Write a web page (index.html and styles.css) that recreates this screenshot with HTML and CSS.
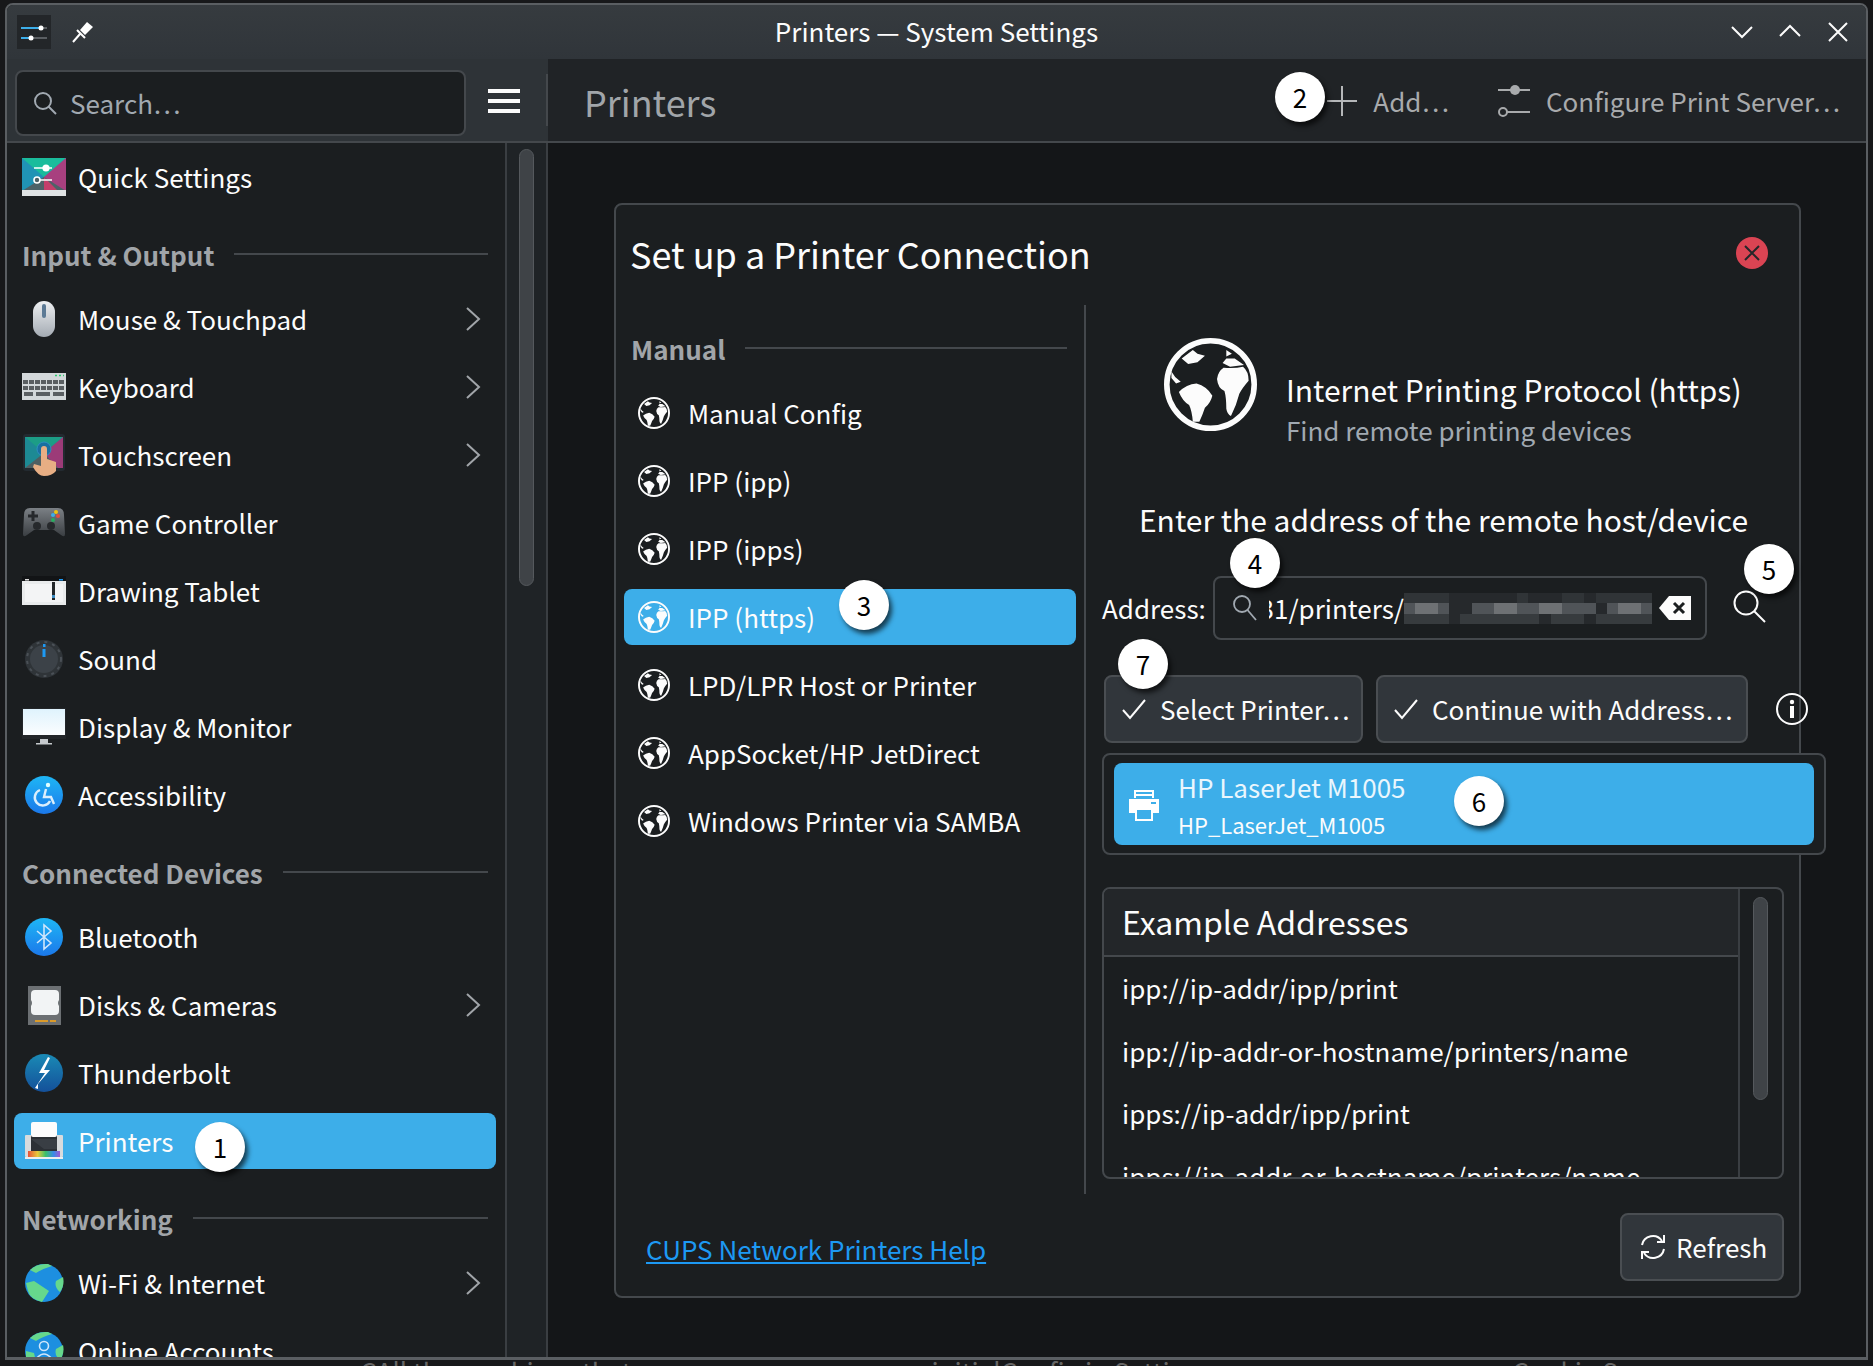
FILE: index.html
```html
<!DOCTYPE html>
<html lang="en">
<head>
    <meta charset="UTF-8">
    <title>Printers — System Settings</title>
    <link rel="stylesheet" href="styles.css">
</head>
<body>
    <svg class="defs" width="0" height="0">
        <defs>
            <linearGradient id="blueFill" x1="0" y1="0" x2="0" y2="1"><stop offset="0" stop-color="#1eb6f5"/><stop offset="1" stop-color="#1b78ea"/></linearGradient>
            <linearGradient id="boltFill" x1="0" y1="0" x2="0" y2="1"><stop offset="0" stop-color="#1a8ab5"/><stop offset="1" stop-color="#14509a"/></linearGradient>
            <linearGradient id="mouseFill" x1="0" y1="0" x2="0" y2="1"><stop offset="0" stop-color="#eef0f2"/><stop offset="1" stop-color="#a4abb3"/></linearGradient>
            <linearGradient id="padFill" x1="0" y1="0" x2="0" y2="1"><stop offset="0" stop-color="#7b8085"/><stop offset="1" stop-color="#3a3e42"/></linearGradient>
            <linearGradient id="screenFill" x1="0" y1="0" x2="0" y2="1"><stop offset="0" stop-color="#dff3fd"/><stop offset="1" stop-color="#fbfdfe"/></linearGradient>
            <linearGradient id="rainbow" x1="0" y1="0" x2="1" y2="0"><stop offset="0" stop-color="#e8503a"/><stop offset=".3" stop-color="#e8c93a"/><stop offset=".55" stop-color="#3ac06a"/><stop offset=".8" stop-color="#3a8ae8"/><stop offset="1" stop-color="#a05ad0"/></linearGradient>
            <symbol id="globe" viewBox="0 0 100 100">
                <circle cx="50" cy="50" r="47" fill="none" stroke="currentColor" stroke-width="6"/>
                <path fill="currentColor" d="M16 58Q24 50 35 49Q46 52 52 62Q50 70 44 75Q41 84 38 90L31 90Q30 78 27 72Q20 68 16 58Z M57 44Q58 36 64 32Q76 33 85 31Q91 36 91 46Q84 54 81 60Q78 72 72 84Q68 82 67 76Q67 64 65 57Q58 54 57 44Z M63 27L67 22L76 22L86 29L71 31Z M19 22L31 13L36 17L44 19L36 26L26 28Z M8 36L12 42L18 47L13 49L8 43Z M67 13L73 17L67 20Z"/>
            </symbol>
            <symbol id="chevron" viewBox="0 0 16 26">
                <path d="M2 2L14 13L2 24" fill="none" stroke="#a1a5a9" stroke-width="2"/>
            </symbol>
        </defs>
    </svg>

    <div class="window">
        <div class="titlebar">
            <div class="title-side">
                <svg class="app-icon" width="34" height="34" viewBox="0 0 34 34">
                    <rect width="34" height="34" fill="#232629"/>
                    <path d="M4 13H24M4 23H14" stroke="#3daee9" stroke-width="2"/>
                    <path d="M24 13H30M14 23H30" stroke="#5a5e62" stroke-width="2"/>
                    <circle cx="24" cy="13" r="2.5" fill="#fff"/><circle cx="14" cy="23" r="2.5" fill="#fff"/>
                </svg>
                <svg class="pin-icon" width="22" height="22" viewBox="0 0 22 22">
                    <path d="M15 1L21 6L13 14L8 9Z" fill="#fff"/>
                    <path d="M5 9L13 17M8 13L1 21" fill="none" stroke="#fff" stroke-width="2"/>
                </svg>
            </div>
            <div class="title-text">Printers — System Settings</div>
            <div class="title-side win-controls">
                <svg width="22" height="22" viewBox="0 0 22 22"><path d="M1 6L11 16L21 6" fill="none" stroke="#fcfcfc" stroke-width="2"/></svg>
                <svg width="22" height="22" viewBox="0 0 22 22"><path d="M1 15L11 5L21 15" fill="none" stroke="#fcfcfc" stroke-width="2"/></svg>
                <svg width="22" height="22" viewBox="0 0 22 22"><path d="M2 2L20 20M20 2L2 20" fill="none" stroke="#fcfcfc" stroke-width="2"/></svg>
            </div>
        </div>

        <div class="main">
            <aside class="sidebar">
                <div class="sidebar-head">
                    <div class="search-box">
                        <svg width="24" height="24" viewBox="0 0 24 24"><circle cx="10" cy="10" r="8" fill="none" stroke="#a1a9b1" stroke-width="2"/><path d="M15.5 15.5L23 23" stroke="#a1a9b1" stroke-width="2"/></svg>
                        <span>Search…</span>
                    </div>
                    <div class="hamburger"><i></i><i></i><i></i></div>
                    <div class="head-sep"></div>
                </div>
                <div class="sidebar-body">
                    <div class="nav-list">
                        <div class="nav-item">
                            <svg class="nav-icon" viewBox="0 0 44 44">
                                <rect y="3" width="44" height="33" fill="#2093b5"/>
                                <path d="M0 3H44L22 22Z" fill="#1abc9c"/><path d="M44 3V36H22L22 22Z" fill="#a8407f"/><path d="M0 36L22 22L44 36Z" fill="#4d6268"/><path d="M22 22L36 36H22Z" fill="#c33f6b"/>
                                <rect y="35" width="44" height="6" fill="#dfe3e4"/>
                                <path d="M12 13H30M12 25H30" stroke="#fff" stroke-width="1.6"/><circle cx="24" cy="13" r="3.6" fill="#fff"/><circle cx="15" cy="25" r="3" fill="#4d6268" stroke="#fff" stroke-width="1.6"/>
                            </svg>
                            <span>Quick Settings</span>
                        </div>

                        <div class="section-head"><span>Input &amp; Output</span><i></i></div>
                        <div class="nav-item">
                            <svg class="nav-icon" viewBox="0 0 44 44">
                                <rect x="11" y="4" width="22" height="36" rx="11" fill="url(#mouseFill)"/><rect x="20" y="7" width="4" height="14" rx="2" fill="#5c7a95"/>
                            </svg>
                            <span>Mouse &amp; Touchpad</span>
                            <svg class="chev"><use href="#chevron"/></svg>
                        </div>
                        <div class="nav-item">
                            <svg class="nav-icon" viewBox="0 0 44 44">
                                <rect y="8" width="44" height="27" fill="#d3d8da"/>
                                <path d="M1 17H43M1 23H43" stroke="#5a5f62" stroke-width="4" stroke-dasharray="5 1"/><path d="M2 29H11M14 29H28M31 29H42" stroke="#5a5f62" stroke-width="4"/>
                                <path d="M33 10.500H42" stroke="#2ecc71" stroke-width="1.500" stroke-dasharray="2 2"/>
                            </svg>
                            <span>Keyboard</span>
                            <svg class="chev"><use href="#chevron"/></svg>
                        </div>
                        <div class="nav-item">
                            <svg class="nav-icon" viewBox="0 0 44 44">
                                <rect x="1" y="1" width="42" height="37" rx="3" fill="#232a30"/><rect x="3" y="4" width="38" height="31" fill="#1d8a94"/>
                                <path d="M3 4H41L22 20Z" fill="#1c9d86"/><path d="M41 4V35H22V20Z" fill="#9c3b78"/><path d="M3 35L22 20L36 35Z" fill="#4f5f62"/>
                                <circle cx="22" cy="16" r="7" fill="#1a6fa0" stroke="#2d8fc0"/>
                                <path d="M19 16a3 3 0 0 1 6 0V26L34 29V38Q30 43 22 43Q16 43 11 34L12 31L19 33Z" fill="#e7ae84"/>
                            </svg>
                            <span>Touchscreen</span>
                            <svg class="chev"><use href="#chevron"/></svg>
                        </div>
                        <div class="nav-item">
                            <svg class="nav-icon" viewBox="0 0 44 44">
                                <path d="M8 7H36Q42 7 42 14L43 33Q43 37 39 34L32 29H12L5 34Q1 37 1 33L2 14Q2 7 8 7Z" fill="url(#padFill)"/>
                                <path d="M11 10V20M6 15H16" stroke="#26292c" stroke-width="3"/><circle cx="31" cy="14" r="2" fill="#3daee9"/><circle cx="36" cy="15" r="2" fill="#e74c3c"/><circle cx="31" cy="19" r="2" fill="#27ae60"/><circle cx="34" cy="11" r="2" fill="#f1c40f"/>
                                <circle cx="15" cy="25" r="4" fill="#26292c"/><circle cx="29" cy="25" r="4" fill="#26292c"/>
                            </svg>
                            <span>Game Controller</span>
                        </div>
                        <div class="nav-item">
                            <svg class="nav-icon" viewBox="0 0 44 44">
                                <rect y="7" width="44" height="6" fill="#121416"/><rect y="12" width="44" height="24" fill="#e9ebec"/><rect x="3" y="15" width="38" height="18" fill="#f3f4f5"/>
                                <rect x="3" y="10" width="4" height="1.500" fill="#ddd"/><rect x="37" y="10" width="4" height="1.500" fill="#1d99f3"/>
                                <rect x="30" y="13" width="3" height="18" fill="#232629"/><rect x="30" y="26" width="3" height="3" fill="#3d8bc0"/>
                            </svg>
                            <span>Drawing Tablet</span>
                        </div>
                        <div class="nav-item">
                            <svg class="nav-icon" viewBox="0 0 44 44">
                                <circle cx="22" cy="22" r="19" fill="#2f3438"/><circle cx="22" cy="22" r="14" fill="#3c4248"/>
                                <circle cx="22" cy="22" r="17" fill="none" stroke="#4a5056" stroke-width="2" stroke-dasharray="3 5"/>
                                <rect x="21" y="7" width="2.500" height="3" fill="#1d99f3"/><rect x="20.500" y="12" width="3" height="8" fill="#1d99f3"/>
                            </svg>
                            <span>Sound</span>
                        </div>
                        <div class="nav-item">
                            <svg class="nav-icon" viewBox="0 0 44 44">
                                <rect y="3" width="44" height="31" fill="#232629"/><rect x="1" y="4" width="42" height="26" fill="url(#screenFill)"/>
                                <rect x="18" y="34" width="8" height="4" fill="#c5c9cc"/><rect x="14" y="38" width="16" height="1.500" fill="#c5c9cc"/>
                            </svg>
                            <span>Display &amp; Monitor</span>
                        </div>
                        <div class="nav-item">
                            <svg class="nav-icon" viewBox="0 0 44 44">
                                <circle cx="22" cy="22" r="19" fill="url(#blueFill)"/><circle cx="26" cy="12" r="2.200" fill="#dff"/>
                                <path d="M18 17A8 8 0 1 0 28 28M24 16L22 24H29L32 31" fill="none" stroke="#dbeefc" stroke-width="2.400"/>
                            </svg>
                            <span>Accessibility</span>
                        </div>

                        <div class="section-head"><span>Connected Devices</span><i></i></div>
                        <div class="nav-item">
                            <svg class="nav-icon" viewBox="0 0 44 44">
                                <circle cx="22" cy="22" r="19" fill="url(#blueFill)"/>
                                <path d="M15 16L29 28L22 34V10L29 16L15 28" fill="none" stroke="#cfe6fb" stroke-width="1.600"/>
                            </svg>
                            <span>Bluetooth</span>
                        </div>
                        <div class="nav-item">
                            <svg class="nav-icon" viewBox="0 0 44 44">
                                <rect x="6" y="3" width="33" height="39" fill="#6c7073"/>
                                <path d="M13 7H33Q37 7 37 11V17Q35 20 37 23V28Q37 32 33 32H13Q9 32 9 28V23Q11 20 9 17V11Q9 7 13 7Z" fill="#f2f4f5"/>
                                <rect x="13" y="37" width="13" height="2" fill="#d99a2b"/><rect x="28" y="37" width="6" height="2" fill="#d99a2b"/>
                            </svg>
                            <span>Disks &amp; Cameras</span>
                            <svg class="chev"><use href="#chevron"/></svg>
                        </div>
                        <div class="nav-item">
                            <svg class="nav-icon" viewBox="0 0 44 44">
                                <circle cx="22" cy="22" r="19" fill="url(#boltFill)"/>
                                <path d="M26 6L17 22L23 22L13 37L16 38L16 33L28 19L22 19L28 7Z" fill="#fff"/>
                            </svg>
                            <span>Thunderbolt</span>
                        </div>
                        <div class="nav-item active">
                            <svg class="nav-icon" viewBox="0 0 44 44">
                                <rect x="3" y="16" width="38" height="22" rx="1" fill="#d8dbdd"/><rect x="9" y="14" width="26" height="22" fill="#2c3035"/><path d="M9 20H35V30H22Z" fill="#3d4248" opacity=".8"/>
                                <rect x="9" y="3" width="26" height="15" rx="2" fill="#fcfcfc"/>
                                <rect x="6" y="32" width="32" height="7" fill="url(#rainbow)"/><rect x="3" y="38" width="38" height="2" fill="#eceeef"/>
                            </svg>
                            <span>Printers</span>
                        </div>

                        <div class="section-head"><span>Networking</span><i></i></div>
                        <div class="nav-item">
                            <svg class="nav-icon" viewBox="0 0 44 44">
                                <circle cx="22" cy="22" r="19" fill="#1d8fe0"/>
                                <path d="M8 9Q15 2 26 3L30 5Q20 8 14 12Z M41 16Q43 24 38 31Q32 26 34 20Z M4 22L12 20L27 30L20 41Q8 38 6 30Z" fill="#66d88c"/>
                            </svg>
                            <span>Wi-Fi &amp; Internet</span>
                            <svg class="chev"><use href="#chevron"/></svg>
                        </div>
                        <div class="nav-item">
                            <svg class="nav-icon" viewBox="0 0 44 44">
                                <circle cx="22" cy="22" r="19" fill="#1d8fe0"/>
                                <path d="M8 9Q15 2 26 3L30 5Q20 8 14 12Z M41 16Q43 24 38 31Q32 26 34 20Z M4 22L12 24L16 41Q6 38 4 30Z" fill="#66d88c"/>
                                <circle cx="22" cy="17" r="4.500" fill="none" stroke="#cfe6fb" stroke-width="1.600"/><path d="M14 30Q22 20 30 30" fill="none" stroke="#cfe6fb" stroke-width="1.600"/>
                            </svg>
                            <span>Online Accounts</span>
                        </div>
                    </div>
                    <div class="side-scroll"><div class="side-thumb"></div></div>
                </div>
            </aside>

            <section class="content">
                <div class="toolbar">
                    <div class="page-title">Printers</div>
                    <div class="tool-actions">
                        <div class="tool-btn">
                            <svg width="30" height="30" viewBox="0 0 30 30"><path d="M15 0V30M0 15H30" stroke="#b5b7b9" stroke-width="2"/></svg>
                            <span>Add…</span>
                        </div>
                        <div class="tool-btn">
                            <svg width="32" height="34" viewBox="0 0 32 34"><path d="M0 6H32M9 28H32" stroke="#a8aaac" stroke-width="2"/><circle cx="17" cy="6" r="5" fill="#a8aaac"/><circle cx="5" cy="28" r="4" fill="none" stroke="#a8aaac" stroke-width="2"/></svg>
                            <span>Configure Print Server…</span>
                        </div>
                    </div>
                </div>

                <div class="view">
                    <div class="card">
                        <div class="card-head">
                            <h2>Set up a Printer Connection</h2>
                            <div class="close-btn">
                                <svg width="18" height="18" viewBox="0 0 18 18"><path d="M2 2L16 16M16 2L2 16" stroke="#232629" stroke-width="2"/></svg>
                            </div>
                        </div>

                        <div class="card-body">
                            <div class="type-col">
                                <div class="section-head"><span>Manual</span><i></i></div>
                                <div class="type-item"><svg class="small-globe"><use href="#globe"/></svg><span>Manual Config</span></div>
                                <div class="type-item"><svg class="small-globe"><use href="#globe"/></svg><span>IPP (ipp)</span></div>
                                <div class="type-item"><svg class="small-globe"><use href="#globe"/></svg><span>IPP (ipps)</span></div>
                                <div class="type-item active"><svg class="small-globe"><use href="#globe"/></svg><span>IPP (https)</span></div>
                                <div class="type-item"><svg class="small-globe"><use href="#globe"/></svg><span>LPD/LPR Host or Printer</span></div>
                                <div class="type-item"><svg class="small-globe"><use href="#globe"/></svg><span>AppSocket/HP JetDirect</span></div>
                                <div class="type-item"><svg class="small-globe"><use href="#globe"/></svg><span>Windows Printer via SAMBA</span></div>
                            </div>

                            <div class="detail-col">
                                <div class="detail-head">
                                    <svg class="big-globe"><use href="#globe"/></svg>
                                    <div class="detail-text">
                                        <div class="detail-title">Internet Printing Protocol (https)</div>
                                        <div class="detail-sub">Find remote printing devices</div>
                                    </div>
                                </div>
                                <div class="prompt">Enter the address of the remote host/device</div>

                                <div class="address-row">
                                    <label>Address:</label>
                                    <div class="address-input">
                                        <svg width="26" height="32" viewBox="0 0 26 32"><circle cx="10" cy="12" r="8" fill="none" stroke="#a1a9b1" stroke-width="1.800"/><path d="M15.500 18L24 28" stroke="#a1a9b1" stroke-width="1.800"/></svg>
                                        <div class="address-value"><span>631/printers/</span></div>
                                        <svg class="redacted" width="248" height="31" viewBox="0 0 22 3" preserveAspectRatio="none" shape-rendering="crispEdges">
                                            <rect width="22" height="3" fill="#26292c"/>
                                            <path d="M0 0h4v1h-4zM10 0h1v1h-1zM14 0h2v1h-2zM17 0h5v1h-5z" fill="#303437"/>
                                            <path d="M0 1h4v1h-4zM6 1h11v1h-11zM18 1h4v1h-4z" fill="#505458"/>
                                            <path d="M1 1h2v1h-2zM8 1h2v1h-2zM12 1h2v1h-2zM19 1h2v1h-2z" fill="#6e7174"/>
                                            <path d="M0 2h4v1h-4zM5 2h7v1h-7zM13 2h3v1h-3zM17 2h5v1h-5z" fill="#373b3e"/>
                                        </svg>
                                        <svg class="clear-icon" width="32" height="24" viewBox="0 0 32 24"><path d="M10 0H32V24H10L0 12Z" fill="#fcfcfc"/><path d="M15 7L25 17M25 7L15 17" stroke="#1b1e20" stroke-width="3"/></svg>
                                    </div>
                                    <svg class="go-search" width="33" height="33" viewBox="0 0 33 33"><circle cx="13" cy="13" r="11.500" fill="none" stroke="#fcfcfc" stroke-width="2"/><path d="M21 21L32 32" stroke="#fcfcfc" stroke-width="2"/></svg>
                                </div>

                                <div class="button-row">
                                    <div class="btn select-btn">
                                        <svg width="24" height="24" viewBox="0 0 24 24"><path d="M1 13L8 21L23 3" fill="none" stroke="#fcfcfc" stroke-width="2"/></svg>
                                        <span>Select Printer…</span>
                                    </div>
                                    <div class="btn continue-btn">
                                        <svg width="24" height="24" viewBox="0 0 24 24"><path d="M1 13L8 21L23 3" fill="none" stroke="#fcfcfc" stroke-width="2"/></svg>
                                        <span>Continue with Address…</span>
                                    </div>
                                    <svg class="info-icon" width="32" height="32" viewBox="0 0 32 32"><circle cx="16" cy="16" r="15" fill="none" stroke="#fcfcfc" stroke-width="2"/><rect x="14" y="13" width="4" height="12" fill="#fcfcfc"/><circle cx="16" cy="9" r="2.200" fill="#fcfcfc"/></svg>
                                </div>

                                <div class="printer-list">
                                    <div class="printer-row">
                                        <svg width="32" height="32" viewBox="0 0 32 32"><path d="M7 9V2H25V9M7 6H25" fill="none" stroke="#fff" stroke-width="2"/><path d="M1 10H31V24H1Z" fill="#fff"/><rect x="8" y="20" width="16" height="11" fill="#3daee9" stroke="#fff" stroke-width="2"/><rect x="23" y="13" width="5" height="2" fill="#3daee9"/></svg>
                                        <div class="printer-text">
                                            <div class="printer-name">HP LaserJet M1005</div>
                                            <div class="printer-queue">HP_LaserJet_M1005</div>
                                        </div>
                                    </div>
                                </div>

                                <div class="examples">
                                    <div class="examples-main">
                                        <div class="examples-head">Example Addresses</div>
                                        <div class="example">ipp://ip-addr/ipp/print</div>
                                        <div class="example">ipp://ip-addr-or-hostname/printers/name</div>
                                        <div class="example">ipps://ip-addr/ipp/print</div>
                                        <div class="example">ipps://ip-addr-or-hostname/printers/name</div>
                                    </div>
                                    <div class="examples-scroll"><div class="examples-thumb"></div></div>
                                </div>
                            </div>
                        </div>

                        <div class="card-foot">
                            <a class="help-link" href="#help">CUPS Network Printers Help</a>
                            <div class="btn refresh-btn">
                                <svg width="26" height="26" viewBox="0 0 26 26"><path d="M2 11A11 11 0 0 1 22 7M24 15A11 11 0 0 1 4 19" fill="none" stroke="#fcfcfc" stroke-width="2"/><path d="M24 1V8H17M2 25V18H9" fill="none" stroke="#fcfcfc" stroke-width="2"/></svg>
                                <span>Refresh</span>
                            </div>
                        </div>
                    </div>
                </div>
            </section>
        </div>
    </div>

    <div class="backdrop-text">
        <span>CAll the machines that</span><span>initialConfig in Settings</span><span>Cookie Se</span>
    </div>

    <div class="badge badge-1">1</div>
    <div class="badge badge-2">2</div>
    <div class="badge badge-3">3</div>
    <div class="badge badge-4">4</div>
    <div class="badge badge-5">5</div>
    <div class="badge badge-6">6</div>
    <div class="badge badge-7">7</div>
</body>
</html>
```

FILE: styles.css
```css
* {
    box-sizing: border-box;
    margin: 0;
    padding: 0;
}

html, body {
    width: 1873px;
    height: 1366px;
    overflow: hidden;
}

body {
    position: relative;
    background: #17181a;
    color: #fcfcfc;
    font-family: "Noto Sans CJK SC", "Noto Sans", sans-serif;
    font-size: 26px;
    line-height: 40px;
}

.defs {
    position: absolute;
}

svg {
    flex-shrink: 0;
    display: block;
}

/* window frame */
.window {
    width: 1863px;
    height: 1357px;
    margin: 3px 0 0 5px;
    border: 2px solid #5a5e62;
    border-bottom-width: 3px;
    border-radius: 8px 8px 0 0;
    display: flex;
    flex-direction: column;
    overflow: hidden;
}

.titlebar {
    height: 54px;
    background: linear-gradient(#363b3f, #30353a);
    display: flex;
    align-items: center;
    justify-content: space-between;
}

.title-side {
    width: 220px;
    display: flex;
    align-items: center;
}

.app-icon {
    margin-left: 10px;
}

.pin-icon {
    margin-left: 21px;
}

.title-text {
    padding-bottom: 3px;
}

.win-controls {
    justify-content: flex-end;
    gap: 26px;
    padding-right: 17px;
}

.main {
    flex: 1;
    display: flex;
    min-height: 0;
}

/* sidebar */
.sidebar {
    width: 541px;
    display: flex;
    flex-direction: column;
    background: #1b1e20;
}

.sidebar-head {
    height: 84px;
    background: #2e3337;
    border-bottom: 2px solid #44484c;
    display: flex;
    align-items: center;
    padding-left: 8px;
}

.search-box {
    width: 451px;
    height: 66px;
    margin-top: 5px;
    background: #1b1e20;
    border: 2px solid #44484c;
    border-radius: 8px;
    display: flex;
    align-items: center;
    padding-left: 16px;
    gap: 13px;
    color: #a1a9b1;
}

.hamburger {
    width: 32px;
    margin: 2px 0 0 22px;
    display: flex;
    flex-direction: column;
    gap: 6px;
}

.hamburger i {
    height: 4px;
    background: #fcfcfc;
}

.head-sep {
    width: 2px;
    height: 52px;
    margin-left: auto;
    background: #44484c;
}

.sidebar-body {
    flex: 1;
    display: flex;
    min-height: 0;
}

.nav-list {
    width: 500px;
    border-right: 2px solid #3a3e42;
    display: flex;
    flex-direction: column;
    overflow: hidden;
}

.nav-item {
    height: 56px;
    flex-shrink: 0;
    margin: 6px 9px 6px 7px;
    padding-left: 8px;
    border-radius: 8px;
    display: flex;
    align-items: center;
    gap: 12px;
}

.nav-item.active {
    background: #3daee9;
}

.nav-icon {
    width: 44px;
    height: 44px;
}

.chev {
    width: 16px;
    height: 26px;
    margin-left: auto;
    margin-right: 15px;
}

.section-head {
    height: 74px;
    flex-shrink: 0;
    padding: 26px 17px 13px 15px;
    display: flex;
    align-items: center;
    gap: 20px;
    color: #a1a5a9;
    font-weight: 700;
}

.section-head i {
    flex: 1;
    height: 2px;
    margin-top: -2px;
    background: #44484c;
}

.side-scroll {
    flex: 1;
    border-right: 2px solid #3a3e42;
    background: #1f2326;
    padding: 6px 0 0 12px;
}

.side-thumb {
    width: 15px;
    height: 437px;
    border-radius: 8px;
    background: #3f4347;
    border: 1px solid #55595d;
}

/* right side */
.content {
    flex: 1;
    display: flex;
    flex-direction: column;
    background: #141618;
}

.toolbar {
    height: 84px;
    background: #202326;
    border-bottom: 2px solid #44484c;
    display: flex;
    align-items: center;
    padding: 2px 26px 0 36px;
}

.page-title {
    font-size: 36px;
    color: #a1a5a9;
}

.tool-actions {
    margin-left: auto;
    display: flex;
    align-items: center;
    gap: 49px;
    color: #a8aaac;
}

.tool-btn {
    display: flex;
    align-items: center;
    gap: 16px;
}

.view {
    flex: 1;
    padding: 60px 0 0 66px;
}

.card {
    width: 1187px;
    height: 1095px;
    background: #1b1e20;
    border: 2px solid #44484c;
    border-radius: 8px;
    display: flex;
    flex-direction: column;
}

.card-head {
    height: 100px;
    padding: 0 31px 0 14px;
    display: flex;
    align-items: center;
    justify-content: space-between;
}

.card-head h2 {
    font-size: 36px;
    font-weight: 400;
    line-height: 48px;
    padding-bottom: 4px;
}

.close-btn {
    width: 32px;
    height: 32px;
    margin-top: -4px;
    border-radius: 50%;
    background: #da4453;
    display: flex;
    align-items: center;
    justify-content: center;
}

.card-body {
    height: 889px;
    display: flex;
}

.type-col {
    width: 470px;
    border-right: 2px solid #44484c;
    flex-shrink: 0;
    display: flex;
    flex-direction: column;
}

.type-item {
    height: 56px;
    flex-shrink: 0;
    margin: 6px 8px 6px 8px;
    padding-left: 14px;
    border-radius: 8px;
    display: flex;
    align-items: center;
    gap: 18px;
}

.type-item span {
    padding-bottom: 1px;
}

.type-item.active {
    background: #3daee9;
}

.small-globe {
    width: 32px;
    height: 32px;
}

.detail-col {
    width: 713px;
    padding: 33px 0 0 16px;
}

.detail-head {
    height: 112px;
    padding-left: 62px;
    display: flex;
    gap: 29px;
}

.big-globe {
    width: 93px;
    height: 93px;
}

.detail-text {
    padding-top: 31px;
}

.detail-title {
    font-size: 30px;
}

.detail-sub {
    color: #a1a9b1;
    margin-top: 1px;
}

.prompt {
    margin: 49px 0 0 -14px;
    font-size: 30px;
    text-align: center;
}

.address-row {
    margin-top: 37px;
    height: 64px;
    display: flex;
    align-items: center;
}

.address-row label {
    width: 111px;
    flex-shrink: 0;
}

.address-input {
    width: 494px;
    height: 64px;
    border: 2px solid #44484c;
    border-radius: 8px;
    display: flex;
    align-items: center;
    padding-left: 17px;
}

.address-value {
    width: 135px;
    margin-left: 11px;
    overflow: hidden;
    display: flex;
    justify-content: flex-end;
    white-space: nowrap;
}

.clear-icon {
    margin-left: 7px;
}

.go-search {
    margin: -4px 0 0 26px;
}

.button-row {
    margin-top: 35px;
    padding-left: 2px;
    display: flex;
    align-items: center;
    gap: 13px;
}

.btn {
    height: 68px;
    flex-shrink: 0;
    background: #31363b;
    border: 2px solid #4a4e52;
    border-radius: 8px;
    display: flex;
    align-items: center;
    gap: 14px;
    padding-left: 16px;
    white-space: nowrap;
}

.select-btn {
    width: 259px;
}

.continue-btn {
    width: 372px;
}

.info-icon {
    margin-left: 15px;
}

.printer-list {
    width: 724px;
    height: 102px;
    margin-top: 10px;
    padding: 8px 10px;
    position: relative;
    background: #1b1e20;
    border: 2px solid #44484c;
    border-radius: 8px;
}

.printer-row {
    height: 82px;
    padding: 2px 0 0 14px;
    background: #3daee9;
    border-radius: 8px;
    display: flex;
    align-items: center;
    gap: 18px;
}

.printer-name {
    line-height: 38px;
    color: #eaf6fd;
}

.printer-queue {
    font-size: 22px;
    line-height: 36px;
}

.examples {
    width: 682px;
    height: 292px;
    margin-top: 32px;
    border: 2px solid #44484c;
    border-radius: 8px;
    display: flex;
    overflow: hidden;
}

.examples-main {
    width: 636px;
    border-right: 2px solid #3a3e42;
    overflow: hidden;
}

.examples-head {
    height: 68px;
    padding: 0 0 2px 18px;
    background: #232629;
    border-bottom: 2px solid #44484c;
    display: flex;
    align-items: center;
    font-size: 32px;
}

.example {
    height: 62.500px;
    padding-left: 18px;
    display: flex;
    align-items: center;
}

.examples-scroll {
    flex: 1;
    padding: 8px 0 0 13px;
}

.examples-thumb {
    width: 15px;
    height: 203px;
    border-radius: 8px;
    background: #3f4347;
    border: 1px solid #55595d;
}

.card-foot {
    flex: 1;
    padding: 0 15px 15px 30px;
    display: flex;
    align-items: flex-end;
    justify-content: space-between;
}

.help-link {
    color: #1d99f3;
    margin-bottom: 12px;
}

.refresh-btn {
    width: 164px;
    gap: 10px;
    padding-left: 18px;
}

/* stuff behind the window */
.backdrop-text {
    height: 6px;
    overflow: hidden;
    display: flex;
    padding-left: 360px;
    gap: 300px;
    line-height: 22px;
    color: #666;
}

/* numbered callouts on top of the screenshot */
.badge {
    position: absolute;
    width: 50px;
    height: 50px;
    border-radius: 50%;
    background: #fff;
    color: #000;
    box-shadow: 3px 4px 5px rgba(0, 0, 0, 0.65);
    display: flex;
    align-items: center;
    justify-content: center;
}

.badge-1 { left: 195px; top: 1122px; }
.badge-2 { left: 1275px; top: 72px; }
.badge-3 { left: 839px; top: 580px; }
.badge-4 { left: 1230px; top: 538px; }
.badge-5 { left: 1744px; top: 544px; }
.badge-6 { left: 1454px; top: 776px; }
.badge-7 { left: 1118px; top: 639px; }
```
